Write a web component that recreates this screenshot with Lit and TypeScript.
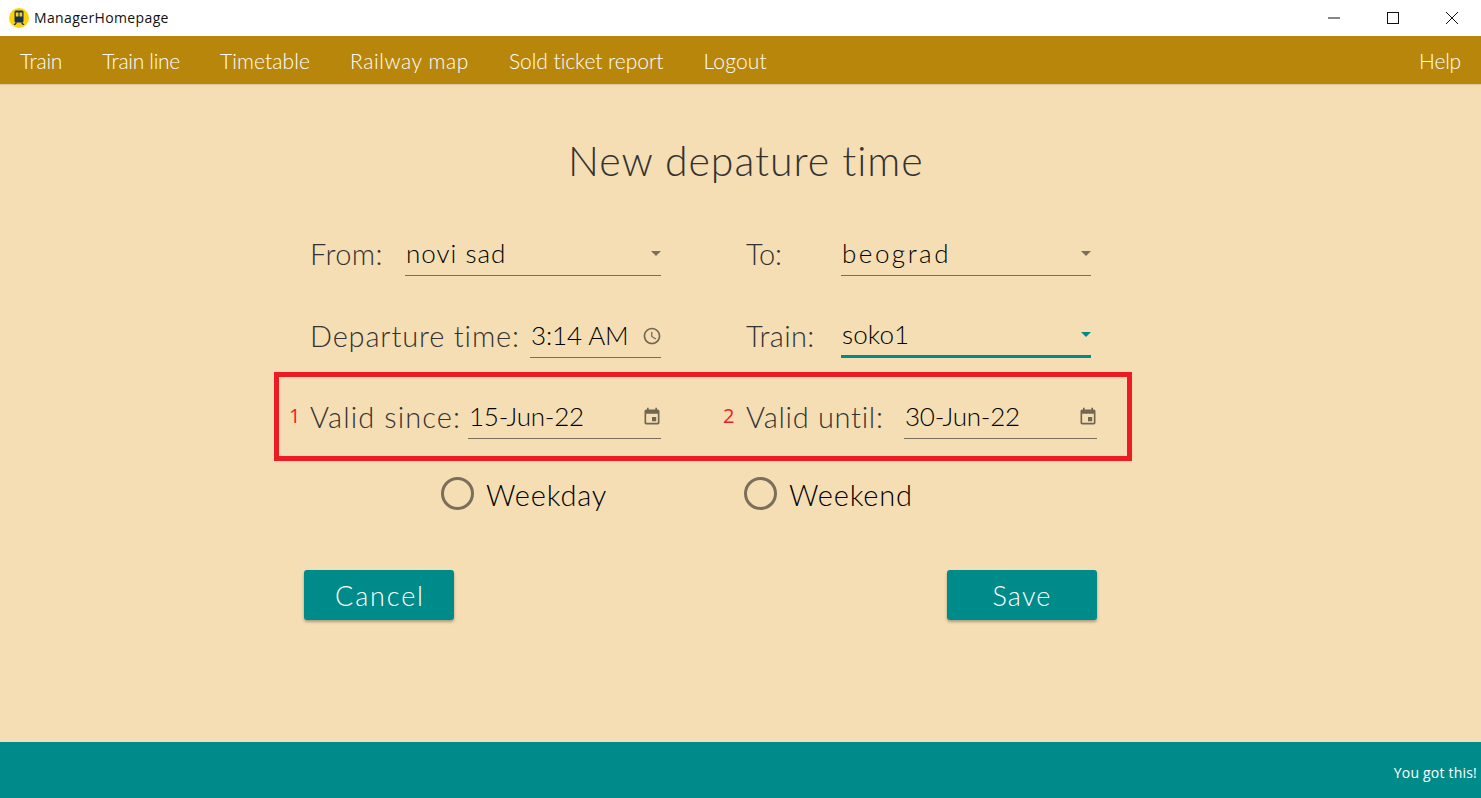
import { LitElement, html, css, svg } from "lit";
import { customElement } from "lit/decorators.js";

const CAL = svg`<path d="M17 12h-5v5h5v-5zM16 1v2H8V1H6v2H5c-1.11 0-1.99.9-1.99 2L3 19c0 1.1.89 2 2 2h14c1.1 0 2-.9 2-2V5c0-1.1-.9-2-2-2h-1V1h-2zm3 18H5V8h14v11z"/>`;
const CLOCK = svg`<path d="M11.99 2C6.47 2 2 6.48 2 12s4.47 10 9.99 10C17.52 22 22 17.52 22 12S17.52 2 11.99 2zM12 20c-4.42 0-8-3.58-8-8s3.58-8 8-8 8 3.58 8 8-3.58 8-8 8zm.5-13H11v6l5.25 3.15.75-1.23-4.5-2.67z"/>`;

@customElement("app-root")
export class AppRoot extends LitElement {
  static styles = css`
    :host { display: flex; flex-direction: column; height: 798px; width: 1481px; overflow: hidden; font-family: "Lato", "Liberation Sans", sans-serif; background: #f5deb3; }
    .titlebar { height: 36px; flex: none; background: #fff; display: flex; align-items: center; font: 14px "Open Sans", "Liberation Sans", sans-serif; color: #111; padding-left: 9px; }
    .logo { width: 20px; height: 20px; margin-right: 5px; }
    .wtitle { flex: 1; letter-spacing: .37px; position: relative; top: -1px; }
    .winbtn { width: 59px; height: 36px; display: flex; align-items: center; justify-content: center; }
    .nav { height: 48px; flex: none; background: #b8860b; box-shadow: 0 1px 1px rgba(0,0,0,.1); display: flex; align-items: center; padding: 0 20px; color: #fff; font-size: 21px; font-weight: 300; gap: 40px; }
    .n1 { letter-spacing: -.2px; }
    .n2l { letter-spacing: -.3px; }
    .n3 { letter-spacing: .1px; }
    .n4 { letter-spacing: .6px; }
    .n5 { letter-spacing: -.05px; }
    .n6 { letter-spacing: .2px; }
    .help { margin-left: auto; letter-spacing: -.2px; }
    .main { flex: 1; display: flex; flex-direction: column; align-items: flex-start; }
    h1 { margin: 52px 0 0 568px; font-weight: 300; font-size: 41px; line-height: 50px; color: #333; letter-spacing: .95px; white-space: nowrap; }
    .row { display: flex; margin-left: 311px; height: 44px; }
    .r1 { margin-top: 46px; }
    .r2 { margin-top: 38px; }
    .field { display: flex; align-items: center; }
    .left { width: 350px; margin-right: 86px; }
    .right { width: 344px; }
    .label { font-size: 29px; font-weight: 300; color: #333; white-space: nowrap; position: relative; top: -1px; left: -1px; }
    .lfrom { letter-spacing: .4px; }
    .lto { letter-spacing: -.2px; }
    .ldep { letter-spacing: .83px; }
    .ltrain { letter-spacing: .3px; }
    .lsince { letter-spacing: 1.1px; }
    .luntil { letter-spacing: .7px; }
    .ctl { height: 44px; box-sizing: border-box; border-bottom: 1px solid #7b6f5b; margin-left: auto; display: flex; align-items: center; font-size: 26px; font-weight: 300; color: #000; white-space: nowrap; }
    .ctl.active { border-bottom: 3px solid #008b8b; }
    .val { flex: 1; padding-left: 1px; position: relative; top: -1px; }
    .vnovi { letter-spacing: 1px; }
    .vbeo { letter-spacing: 2.5px; }
    .vsoko { letter-spacing: .1px; }
    .vtime { letter-spacing: -.1px; }
    .vdate { letter-spacing: -.25px; }
    .w256 { width: 256px; }
    .w250 { width: 250px; }
    .w131 { width: 131px; }
    .w193 { width: 193px; }
    .caret { width: 0; height: 0; border-left: 5px solid transparent; border-right: 5px solid transparent; border-top: 5px solid #7b6f5b; }
    .active .caret { border-top-color: #008b8b; }
    .ico { width: 20px; height: 20px; fill: rgba(0,0,0,.54); margin-right: -1px; flex: none; }
    .box { margin: 14px 0 0 274px; width: 858px; height: 89px; box-sizing: border-box; border: 5px solid #ed1c24; display: flex; align-items: flex-start; padding-top: 18px; }
    .num { color: #ed1c24; font-size: 20px; line-height: 44px; height: 44px; font-family: "Open Sans", sans-serif; flex: none; position: relative; top: -1px; }
    .n-1 { width: 32px; box-sizing: border-box; padding-left: 10px; }
    .n-2 { width: 24px; }
    .since { width: 350px; height: 44px; margin-right: 62px; }
    .until { width: 350px; height: 44px; }
    .radios { display: flex; margin: 12px 0 0 441px; height: 40px; align-items: center; }
    .radio { display: flex; align-items: center; font-size: 29px; font-weight: 300; color: #000; letter-spacing: .8px; }
    .rtext { position: relative; top: 1px; }
    .circle { width: 33px; height: 33px; box-sizing: border-box; border: 3px solid #7b6f5b; border-radius: 50%; margin-right: 12px; }
    .wd { width: 303px; }
    .btns { display: flex; justify-content: space-between; width: 793px; margin: 57px 0 0 304px; }
    .btn { width: 150px; height: 50px; background: #008b8b; color: #fff; font-size: 27px; font-weight: 300; border-radius: 3px; display: flex; align-items: center; justify-content: center; box-shadow: 0 2px 3px rgba(0,0,0,.3); }
    .bcancel { letter-spacing: 1.85px; padding-left: 2px; box-sizing: border-box; }
    .bsave { letter-spacing: 1.2px; }
    .footer { height: 56px; flex: none; background: #008b8b; color: #fff; display: flex; align-items: flex-end; justify-content: flex-end; font: 14px "Open Sans", sans-serif; letter-spacing: .2px; padding: 0 4px 16px 0; box-sizing: border-box; }
  `;

  private icon(p: unknown) {
    return html`<svg class="ico" viewBox="0 0 24 24">${p}</svg>`;
  }

  render() {
    return html`
      <div class="titlebar">
        <svg class="logo" viewBox="0 0 20 20">
          <circle cx="10" cy="10" r="10" fill="#fcd20a"/>
          <path d="M7 2.500h6a1.500 1.500 0 0 1 1.500 1.500v9a1.500 1.500 0 0 1-1.500 1.500H7A1.500 1.500 0 0 1 5.500 13V4A1.500 1.500 0 0 1 7 2.500z" fill="#16305a"/>
          <rect x="6.800" y="4.500" width="2.700" height="4" fill="#fcd20a"/>
          <rect x="10.500" y="4.500" width="2.700" height="4" fill="#fcd20a"/>
          <path d="M6.500 14.500L4.500 17h1.800l2-2.500zM13.500 14.500L15.500 17h-1.800l-2-2.500z" fill="#16305a"/>
        </svg>
        <span class="wtitle">ManagerHomepage</span>
        <div class="winbtn"><svg width="12" height="12" viewBox="0 0 12 12"><path d="M0 6h12" stroke="#111" fill="none"/></svg></div>
        <div class="winbtn"><svg width="12" height="12" viewBox="0 0 12 12"><rect x=".5" y=".5" width="11" height="11" stroke="#111" fill="none"/></svg></div>
        <div class="winbtn"><svg width="12" height="12" viewBox="0 0 12 12"><path d="M0 0l12 12M12 0L0 12" stroke="#111" fill="none"/></svg></div>
      </div>
      <div class="nav">
        <span class="n1">Train</span><span class="n2l">Train line</span><span class="n3">Timetable</span><span class="n4">Railway map</span><span class="n5">Sold ticket report</span><span class="n6">Logout</span>
        <span class="help">Help</span>
      </div>
      <div class="main">
        <h1>New depature time</h1>
        <div class="row r1">
          <div class="field left"><span class="label lfrom">From:</span>
            <div class="ctl w256"><span class="val vnovi">novi sad</span><span class="caret"></span></div></div>
          <div class="field right"><span class="label lto">To:</span>
            <div class="ctl w250"><span class="val vbeo">beograd</span><span class="caret"></span></div></div>
        </div>
        <div class="row r2">
          <div class="field left"><span class="label ldep">Departure time:</span>
            <div class="ctl w131"><span class="val vtime">3:14 AM</span>${this.icon(CLOCK)}</div></div>
          <div class="field right"><span class="label ltrain">Train:</span>
            <div class="ctl w250 active"><span class="val vsoko">soko1</span><span class="caret"></span></div></div>
        </div>
        <div class="box">
          <span class="num n-1">1</span>
          <div class="field since"><span class="label lsince">Valid since:</span>
            <div class="ctl w193"><span class="val vdate">15-Jun-22</span>${this.icon(CAL)}</div></div>
          <span class="num n-2">2</span>
          <div class="field until"><span class="label luntil">Valid until:</span>
            <div class="ctl w193"><span class="val vdate">30-Jun-22</span>${this.icon(CAL)}</div></div>
        </div>
        <div class="radios">
          <div class="radio wd"><span class="circle"></span><span class="rtext">Weekday</span></div>
          <div class="radio"><span class="circle"></span><span class="rtext">Weekend</span></div>
        </div>
        <div class="btns"><div class="btn bcancel">Cancel</div><div class="btn bsave">Save</div></div>
      </div>
      <div class="footer">You got this!</div>
    `;
  }
}
